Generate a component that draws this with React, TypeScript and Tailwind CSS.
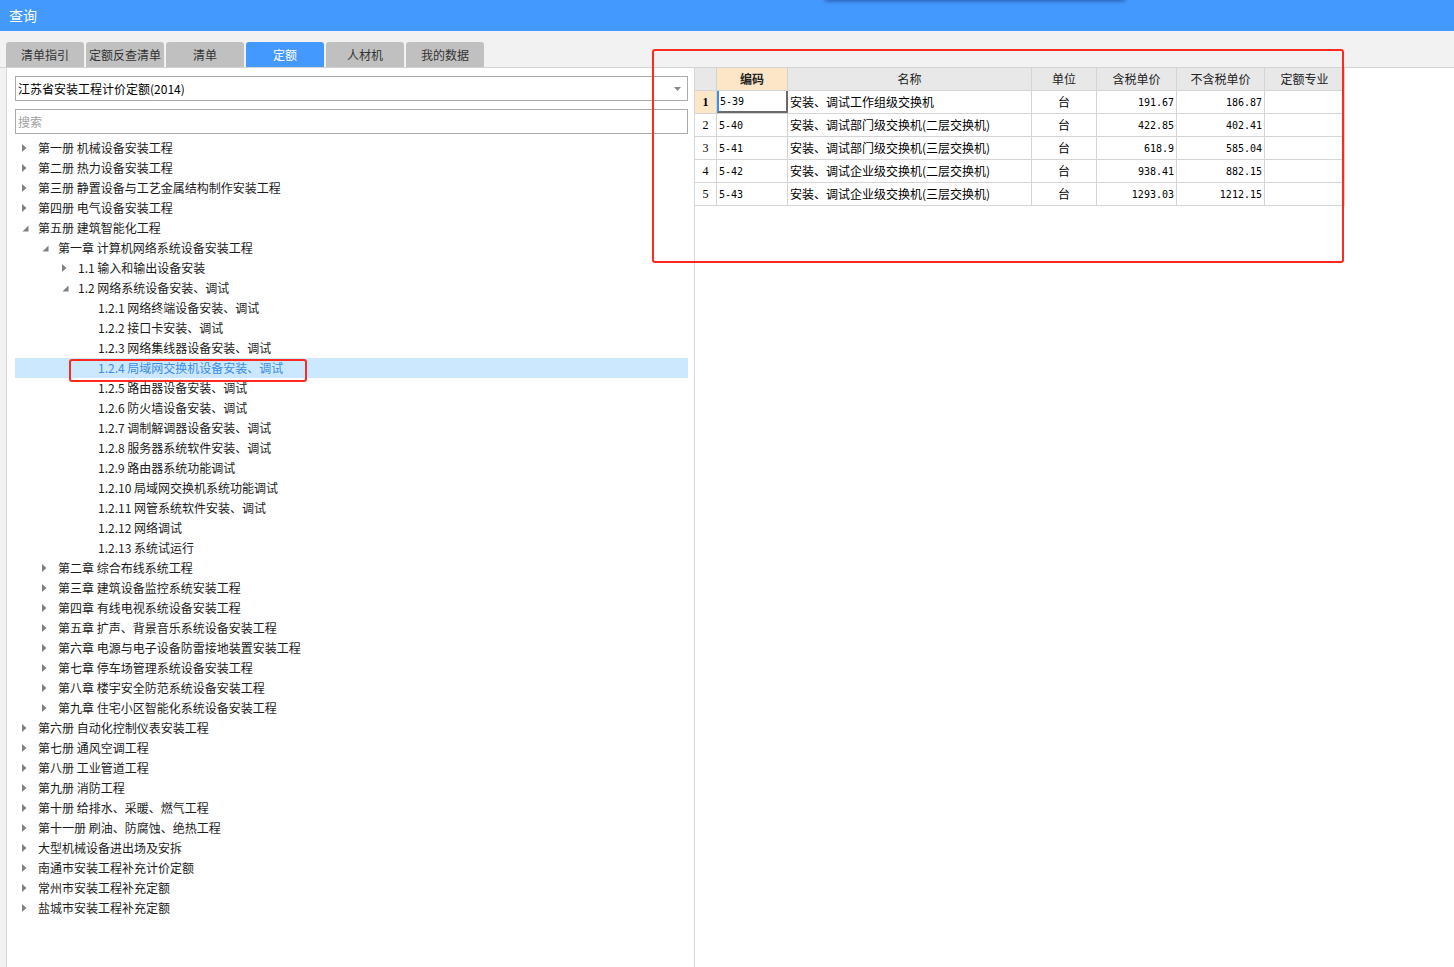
import React from 'react';

type Node = {
  label: string;
  level: number;
  state: 'open' | 'closed' | 'leaf';
  selected?: boolean;
};

const tree: Node[] = [
  { label: '第一册 机械设备安装工程', level: 0, state: 'closed' },
  { label: '第二册 热力设备安装工程', level: 0, state: 'closed' },
  { label: '第三册 静置设备与工艺金属结构制作安装工程', level: 0, state: 'closed' },
  { label: '第四册 电气设备安装工程', level: 0, state: 'closed' },
  { label: '第五册 建筑智能化工程', level: 0, state: 'open' },
  { label: '第一章 计算机网络系统设备安装工程', level: 1, state: 'open' },
  { label: '1.1 输入和输出设备安装', level: 2, state: 'closed' },
  { label: '1.2 网络系统设备安装、调试', level: 2, state: 'open' },
  { label: '1.2.1 网络终端设备安装、调试', level: 3, state: 'leaf' },
  { label: '1.2.2 接口卡安装、调试', level: 3, state: 'leaf' },
  { label: '1.2.3 网络集线器设备安装、调试', level: 3, state: 'leaf' },
  { label: '1.2.4 局域网交换机设备安装、调试', level: 3, state: 'leaf', selected: true },
  { label: '1.2.5 路由器设备安装、调试', level: 3, state: 'leaf' },
  { label: '1.2.6 防火墙设备安装、调试', level: 3, state: 'leaf' },
  { label: '1.2.7 调制解调器设备安装、调试', level: 3, state: 'leaf' },
  { label: '1.2.8 服务器系统软件安装、调试', level: 3, state: 'leaf' },
  { label: '1.2.9 路由器系统功能调试', level: 3, state: 'leaf' },
  { label: '1.2.10 局域网交换机系统功能调试', level: 3, state: 'leaf' },
  { label: '1.2.11 网管系统软件安装、调试', level: 3, state: 'leaf' },
  { label: '1.2.12 网络调试', level: 3, state: 'leaf' },
  { label: '1.2.13 系统试运行', level: 3, state: 'leaf' },
  { label: '第二章 综合布线系统工程', level: 1, state: 'closed' },
  { label: '第三章 建筑设备监控系统安装工程', level: 1, state: 'closed' },
  { label: '第四章 有线电视系统设备安装工程', level: 1, state: 'closed' },
  { label: '第五章 扩声、背景音乐系统设备安装工程', level: 1, state: 'closed' },
  { label: '第六章 电源与电子设备防雷接地装置安装工程', level: 1, state: 'closed' },
  { label: '第七章 停车场管理系统设备安装工程', level: 1, state: 'closed' },
  { label: '第八章 楼宇安全防范系统设备安装工程', level: 1, state: 'closed' },
  { label: '第九章 住宅小区智能化系统设备安装工程', level: 1, state: 'closed' },
  { label: '第六册 自动化控制仪表安装工程', level: 0, state: 'closed' },
  { label: '第七册 通风空调工程', level: 0, state: 'closed' },
  { label: '第八册 工业管道工程', level: 0, state: 'closed' },
  { label: '第九册 消防工程', level: 0, state: 'closed' },
  { label: '第十册 给排水、采暖、燃气工程', level: 0, state: 'closed' },
  { label: '第十一册 刷油、防腐蚀、绝热工程', level: 0, state: 'closed' },
  { label: '大型机械设备进出场及安拆', level: 0, state: 'closed' },
  { label: '南通市安装工程补充计价定额', level: 0, state: 'closed' },
  { label: '常州市安装工程补充定额', level: 0, state: 'closed' },
  { label: '盐城市安装工程补充定额', level: 0, state: 'closed' },
];

const indent = ['pl-0', 'pl-[20px]', 'pl-[40px]', 'pl-[60px]'];

const tabs = ['清单指引', '定额反查清单', '清单', '定额', '人材机', '我的数据'];

const rows = [
  { code: '5-39', name: '安装、调试工作组级交换机', unit: '台', tax: '191.67', noTax: '186.87' },
  { code: '5-40', name: '安装、调试部门级交换机(二层交换机)', unit: '台', tax: '422.85', noTax: '402.41' },
  { code: '5-41', name: '安装、调试部门级交换机(三层交换机)', unit: '台', tax: '618.9', noTax: '585.04' },
  { code: '5-42', name: '安装、调试企业级交换机(二层交换机)', unit: '台', tax: '938.41', noTax: '882.15' },
  { code: '5-43', name: '安装、调试企业级交换机(三层交换机)', unit: '台', tax: '1293.03', noTax: '1212.15' },
];

const cols = 'grid grid-cols-[22px_71px_244px_65px_80px_88px_80px]';
const cell = 'border-r border-b border-[#d4d4d4] h-[23px] flex items-center';
const mono = 'font-["DejaVu_Sans_Mono",monospace] text-[10px]';

const Toggle = ({ state }: { state: Node['state'] }) => {
  if (state === 'leaf') return <span className="w-[23px]" />;
  return (
    <span className="w-[23px] flex items-center pl-[7px]">
      {state === 'closed' ? (
        <svg width="5" height="8" viewBox="0 0 5 8">
          <path d="M0 0 L4.5 4 L0 8 Z" fill="#808080" />
        </svg>
      ) : (
        <svg width="7" height="7" viewBox="0 0 7 7">
          <path d="M6.5 0.5 L6.5 6.5 L0.5 6.5 Z" fill="#808080" />
        </svg>
      )}
    </span>
  );
};

export default function App() {
  return (
    <div className='relative w-[1454px] h-[967px] overflow-hidden bg-[#f2f2f2] font-["Noto_Sans_CJK_SC","Noto_Sans",sans-serif] text-[12px] text-[#1a1a1a]'>
      {/* title bar */}
      <div className="relative h-[31px] bg-[#4499ff] flex items-center px-[9px] text-white text-[14px]">
        查询
        <div className="absolute left-[825px] top-[-6px] w-[300px] h-[6px] bg-[#4499ff] shadow-[0_1px_4px_rgba(0,0,60,0.45)]" />
      </div>

      {/* tabs */}
      <div className="flex gap-[2px] pl-[6px] pt-[11px]">
        {tabs.map((t) => (
          <div
            key={t}
            className={
              t === '定额'
                ? 'w-[78px] h-[25px] rounded-t-[3px] bg-[#4499ff] text-white flex items-center justify-center text-[12px]'
                : 'w-[78px] h-[25px] rounded-t-[3px] bg-[#c0c0c0] text-[#333] flex items-center justify-center text-[12px]'
            }
          >
            {t}
          </div>
        ))}
      </div>

      {/* content */}
      <div className="flex h-[900px] border-t border-[#d4d4d4]">
        {/* left panel */}
        <div className="ml-[6px] w-[689px] bg-white border-l border-r border-[#d8d8d8] pl-[8px] pr-[6px] pt-[8px] flex flex-col">
          <div className="h-[25px] border border-[#ababab] flex items-center justify-between pl-[2px] pr-[6px] text-[12px] text-black">
            <span>江苏省安装工程计价定额(2014)</span>
            <svg width="7" height="4" viewBox="0 0 7 4">
              <path d="M0 0 L7 0 L3.5 4 Z" fill="#8a8a8a" />
            </svg>
          </div>
          <div className="mt-[8px] h-[25px] border border-[#ababab] flex items-center pl-[2px] text-[12px] text-[#a0a0a0]">
            搜索
          </div>
          <div className="mt-[4px] flex flex-col">
            {tree.map((n) => (
              <div
                key={n.label}
                className={
                  (n.selected ? 'bg-[#cce8ff] text-[#3a8ee6] ' : '') +
                  'h-[20px] flex items-center whitespace-nowrap ' +
                  indent[n.level]
                }
              >
                <Toggle state={n.state} />
                <span>{n.label}</span>
              </div>
            ))}
          </div>
        </div>

        {/* right panel */}
        <div className="flex-1 bg-white">
          <div className="w-[650px]">
            <div className={cols + ' bg-[#e8e8e8] text-[12px] text-[#222]'}>
              <div className={cell} />
              <div className={cell + ' justify-center bg-[#fde6c8] font-bold'}>编码</div>
              <div className={cell + ' justify-center'}>名称</div>
              <div className={cell + ' justify-center'}>单位</div>
              <div className={cell + ' justify-center'}>含税单价</div>
              <div className={cell + ' justify-center'}>不含税单价</div>
              <div className={cell + ' justify-center'}>定额专业</div>
            </div>
            {rows.map((r, i) => (
              <div key={r.code} className={cols + ' text-[12px] text-black'}>
                <div
                  className={
                    cell +
                    ' justify-center font-["Liberation_Serif",serif] text-[12px] ' +
                    (i === 0 ? 'bg-[#fde6c8] font-bold' : '')
                  }
                >
                  {i + 1}
                </div>
                {i === 0 ? (
                  <div className="border-b border-[#d4d4d4] h-[23px] flex items-center">
                    <div className={'w-full h-full flex items-center pl-[1px] border-l-2 border-l-[#3d8ef0] border-r-2 border-b-2 border-r-[#6a6a6a] border-b-[#6a6a6a] ' + mono}>
                      {r.code}
                    </div>
                  </div>
                ) : (
                  <div className={cell + ' pl-[2px] ' + mono}>{r.code}</div>
                )}
                <div className={cell + ' pl-[2px] whitespace-nowrap'}>{r.name}</div>
                <div className={cell + ' justify-center'}>{r.unit}</div>
                <div className={cell + ' justify-end pr-[2px] ' + mono}>{r.tax}</div>
                <div className={cell + ' justify-end pr-[2px] ' + mono}>{r.noTax}</div>
                <div className={cell} />
              </div>
            ))}
          </div>
        </div>
      </div>

      {/* annotations */}
      <div className="absolute left-[652px] top-[49px] w-[692px] h-[214px] border-2 border-[#ff2a1f] rounded-[3px] pointer-events-none" />
      <div className="absolute left-[69px] top-[359px] w-[238px] h-[23px] border-2 border-[#ff2a1f] rounded-[3px] pointer-events-none" />
    </div>
  );
}
